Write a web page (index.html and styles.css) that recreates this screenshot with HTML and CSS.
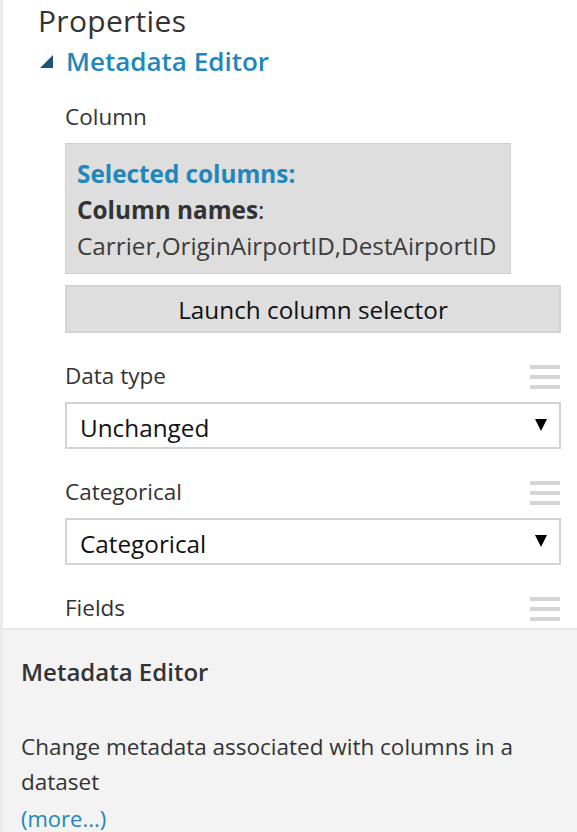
FILE: index.html
```html
<!DOCTYPE html>
<html>
<head>
<meta charset="utf-8">
<link rel="stylesheet" href="styles.css">
</head>
<body>
<div class="pane">
  <div class="props">
    <h1 class="props-title">Properties</h1>
    <div class="section-head">
      <svg class="caret" width="14" height="14" viewBox="0 0 14 14"><polygon points="13,0 13,13 0,13" fill="#1d5578"/></svg>
      <span class="section-name">Metadata Editor</span>
    </div>
    <div class="fields">
      <div class="label-row first"><span class="label">Column</span></div>
      <div class="selbox">
        <div class="sel-title">Selected columns:</div>
        <div class="sel-names"><b>Column names</b>:</div>
        <div class="sel-list">Carrier,OriginAirportID,DestAirportID</div>
      </div>
      <div class="btn">Launch column selector</div>

      <div class="label-row"><span class="label">Data type</span><span class="grip"><i></i><i></i><i></i></span></div>
      <div class="select"><span class="value">Unchanged</span><svg class="arrow" width="12" height="12" viewBox="0 0 12 12"><polygon points="0,0 12,0 6,12" fill="#000"/></svg></div>

      <div class="label-row"><span class="label">Categorical</span><span class="grip"><i></i><i></i><i></i></span></div>
      <div class="select"><span class="value">Categorical</span><svg class="arrow" width="12" height="12" viewBox="0 0 12 12"><polygon points="0,0 12,0 6,12" fill="#000"/></svg></div>

      <div class="label-row"><span class="label">Fields</span><span class="grip"><i></i><i></i><i></i></span></div>
    </div>
  </div>
  <div class="help">
    <h2 class="help-title">Metadata Editor</h2>
    <p class="help-text">Change metadata associated with columns in a dataset</p>
    <a class="more">(more...)</a>
  </div>
</div>
</body>
</html>
```

FILE: styles.css
```css
html, body {
  margin: 0;
  padding: 0;
  background: #ffffff;
}
body {
  font-family: "Open Sans", "Noto Sans", sans-serif;
  color: #333333;
  width: 577px;
  height: 832px;
  overflow: hidden;
}
.pane {
  border-left: 3px solid #ebebeb;
  height: 832px;
  display: flex;
  flex-direction: column;
}
.props {
  height: 628px;
  flex: none;
  overflow: hidden;
  padding-left: 35px;
}
.props-title {
  margin: 0;
  font-weight: 400;
  font-size: 30px;
  letter-spacing: 0.3px;
  line-height: 41px;
  color: #333;
}
.section-head {
  display: flex;
  align-items: center;
  height: 50px;
  margin-top: -5px;
}
.caret {
  margin-left: 2px;
  margin-right: 12px;
  margin-top: 1px;
}
.section-name {
  color: #2187bb;
  font-weight: 600;
  font-size: 26px;
  line-height: 34px;
}
.fields {
  margin-left: 27px;
  margin-right: 16px;
}
.label-row {
  display: flex;
  justify-content: space-between;
  align-items: center;
  height: 34px;
  margin-top: 25px;
  margin-bottom: 10px;
}
.label-row.first {
  margin-top: 13px;
  margin-bottom: 10px;
}
.label {
  font-size: 22.5px;
  color: #333;
}
.grip {
  display: flex;
  flex-direction: column;
  gap: 6px;
  width: 30px;
  margin-right: 1px;
  margin-top: 3px;
}
.grip i {
  display: block;
  height: 4px;
  background: #d5d5d5;
}
.selbox {
  background: #dedede;
  border: 1px solid #d0d0d0;
  width: 446px;
  box-sizing: border-box;
  padding: 12px 10px 9px 11px;
  font-size: 24.3px;
  line-height: 36px;
}
.sel-title {
  color: #2187bb;
  font-weight: 700;
}
.sel-names b {
  color: #333;
  font-weight: 700;
}
.sel-list {
  color: #3c3c3c;
  white-space: nowrap;
}
.btn {
  margin-top: 11px;
  height: 48px;
  box-sizing: border-box;
  border: 2px solid #d3d3d3;
  background: #dedede;
  display: flex;
  align-items: center;
  justify-content: center;
  font-size: 24.3px;
  color: #111;
}
.select {
  height: 47px;
  box-sizing: border-box;
  border: 2px solid #d3d3d3;
  display: flex;
  align-items: center;
  justify-content: space-between;
  padding: 0 12px 0 13px;
  font-size: 24.3px;
  color: #111;
}
.value {
  padding-top: 3px;
}
.arrow {
  display: block;
  margin-top: -2px;
}
.help {
  flex: 1;
  background: #f3f3f3;
  border-top: 2px solid #e6e6e6;
  padding-left: 18px;
  padding-right: 10px;
}
.help-title {
  margin: 27px 0 0 0;
  font-size: 24px;
  font-weight: 600;
  line-height: 30px;
  color: #333;
}
.help-text {
  margin: 42px 0 0 0;
  font-size: 22.5px;
  line-height: 35px;
  color: #333;
}
.more {
  display: block;
  font-size: 22px;
  line-height: 39px;
  color: #2187bb;
}
```
